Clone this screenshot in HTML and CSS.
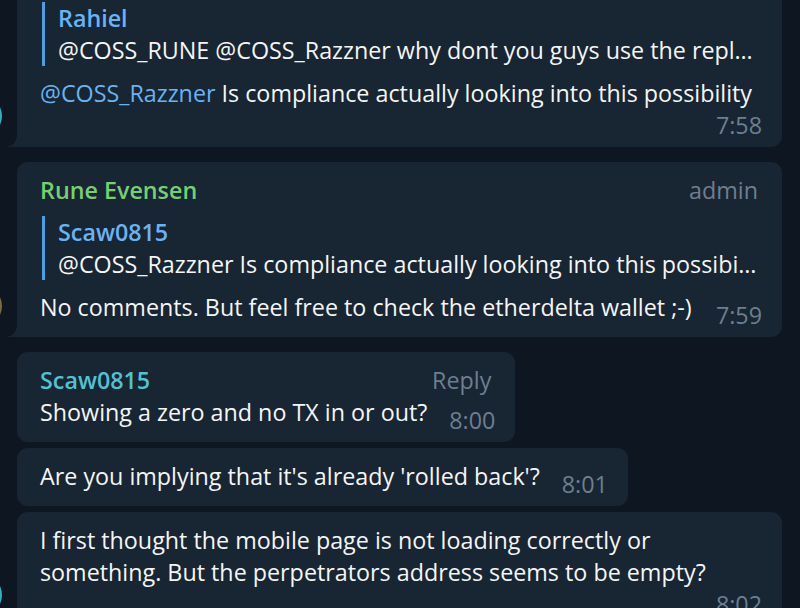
FILE: index.html
```html
<!DOCTYPE html>
<html>
<head>
<meta charset="utf-8">
<link rel="stylesheet" href="styles.css">
</head>
<body>
<div class="chat">
  <div class="group">
    <div class="avatar teal"></div>
    <div class="msgs">
      <div class="bubble wide tail first">
        <div class="quote first-quote">
          <div class="qname">Rahiel</div>
          <div class="qtext">@COSS_RUNE @COSS_Razzner why dont you guys use the repl…</div>
        </div>
        <div class="text"><span class="mention">@COSS_Razzner</span> Is compliance actually looking into this possibility</div>
        <div class="time block">7:58</div>
      </div>
    </div>
  </div>

  <div class="group">
    <div class="avatar brown"></div>
    <div class="msgs">
      <div class="bubble wide tail">
        <div class="header">
          <span class="name green">Rune Evensen</span>
          <span class="label">admin</span>
        </div>
        <div class="quote">
          <div class="qname">Scaw0815</div>
          <div class="qtext">@COSS_Razzner Is compliance actually looking into this possibi…</div>
        </div>
        <div class="body">
          <div class="text nowrap">No comments. But feel free to check the etherdelta wallet ;-)</div>
          <div class="time">7:59</div>
        </div>
      </div>
    </div>
  </div>

  <div class="group">
    <div class="avatar teal"></div>
    <div class="msgs">
      <div class="bubble">
        <div class="header">
          <span class="name cyan">Scaw0815</span>
          <span class="label">Reply</span>
        </div>
        <div class="body">
          <div class="text nowrap">Showing a zero and no TX in or out?</div>
          <div class="time">8:00</div>
        </div>
      </div>
      <div class="bubble">
        <div class="body">
          <div class="text nowrap">Are you implying that it's already 'rolled back'?</div>
          <div class="time">8:01</div>
        </div>
      </div>
      <div class="bubble wide tail">
        <div class="text">I first thought the mobile page is not loading correctly or<br>something. But the perpetrators address seems to be empty?</div>
        <div class="time block">8:02</div>
      </div>
    </div>
  </div>
</div>
</body>
</html>
```

FILE: styles.css
```css
html, body {
  margin: 0;
  padding: 0;
}

body {
  background: #0e1621;
  width: 800px;
  height: 608px;
  overflow: hidden;
  font-family: "Open Sans", "Noto Sans", sans-serif;
  font-size: 23.3px;
  line-height: 32px;
  color: #f5f5f5;
}

.chat {
  display: flex;
  flex-direction: column;
  gap: 15px;
  margin-top: -10px;
  padding-right: 18px;
}

.group {
  display: flex;
  align-items: flex-end;
}

.avatar {
  flex: none;
  width: 42px;
  height: 42px;
  border-radius: 50%;
  margin: 0 15px 10px -40px;
}

.avatar.teal {
  background: #37b0bd;
}

.avatar.brown {
  background: #7d6a44;
}

.msgs {
  flex: 1;
  min-width: 0;
  display: flex;
  flex-direction: column;
  align-items: flex-start;
  gap: 6px;
}

.bubble {
  position: relative;
  background: #182533;
  border-radius: 11px;
  padding: 12px 20px 14px 23px;
  box-sizing: border-box;
  max-width: 100%;
}

.bubble.wide {
  align-self: stretch;
}

.bubble.tail {
  border-bottom-left-radius: 0;
}

.bubble.tail::before {
  content: "";
  position: absolute;
  left: -11px;
  bottom: 0;
  width: 11px;
  height: 11px;
  background: radial-gradient(circle at 0 0, transparent 10.5px, #182533 11px);
}

.header {
  display: flex;
  justify-content: space-between;
  gap: 24px;
  padding-right: 4px;
}

.name {
  font-weight: 600;
}

.green {
  color: #77cf73;
}

.cyan {
  color: #52c2d2;
}

.label {
  color: #6d7f8f;
}

.quote {
  margin: 10px 0 11px 2px;
  border-left: 3px solid #4a9fe0;
  padding-left: 13px;
}

.quote.first-quote {
  margin-top: 0;
}

.qname {
  color: #6ab3f3;
  font-weight: 600;
}

.qtext {
  white-space: nowrap;
  overflow: hidden;
}

.mention {
  color: #6ab3f3;
}

.body {
  display: flex;
  align-items: flex-end;
  justify-content: space-between;
  gap: 22px;
}

.nowrap {
  white-space: nowrap;
}

.time {
  flex: none;
  color: #6d7f8f;
  margin-bottom: -8px;
}

.time.block {
  text-align: right;
}
```
